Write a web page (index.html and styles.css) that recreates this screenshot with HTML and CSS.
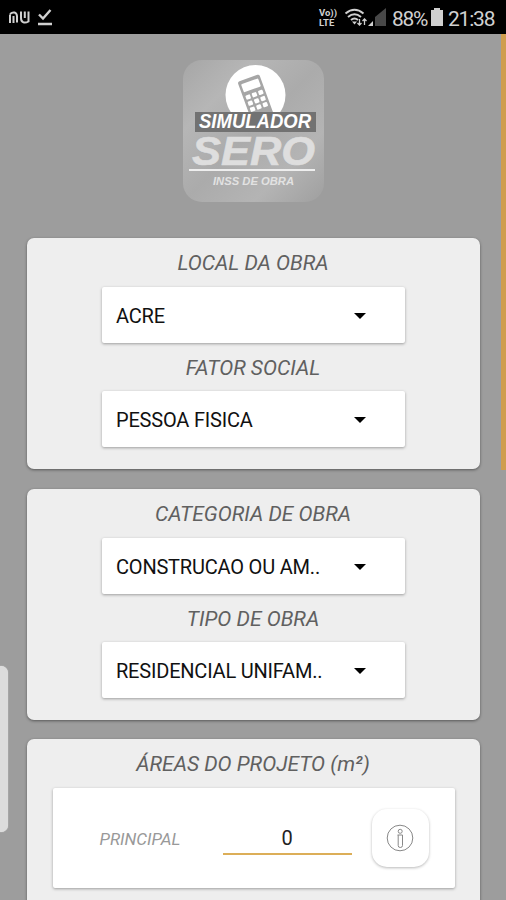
FILE: index.html
```html
<!DOCTYPE html>
<html lang="pt-BR">
    <head>
        <meta charset="UTF-8"/>
        <title>Simulador SERO</title>
        <link rel="stylesheet" href="styles.css">
    </head>

    <body>
        <header class="status-bar">
            <div class="status-left">
                <svg class="nu" viewBox="0 0 22 14" width="22" height="14">
                    <path d="M2 13V4.500M2 4C5 1.500 8.500 2 9 6V12.500M5.500 13V6"/>
                    <path d="M13 1.500V8C13 13 17 13.500 20.500 11.500V1.500M16.800 1.500V8"/>
                </svg>
                <svg class="check" viewBox="0 0 16 18" width="16" height="18">
                    <path d="M2 6.500L6 10.500L13.500 2M1 16H15"/>
                </svg>
            </div>
            <div class="status-right">
                <span class="volte"><span>Vo))</span><span>LTE</span></span>
                <svg class="wifi" viewBox="0 0 24 19" width="24" height="19">
                    <path d="M1.500 5.500Q10.500-2 19.500 5.500M4 9Q10.500 3.500 17 9M7 12Q10.500 9 14 12"/>
                    <path class="solid" d="M8 13.500L10.500 16.500L13 13.500Z"/>
                    <path class="arrows" d="M15.500 11V17M13.500 15L15.500 17L17.500 15M20.500 17V11M18.500 13L20.500 11L22.500 13"/>
                </svg>
                <svg class="signal" viewBox="0 0 18 18" width="18" height="18">
                    <path fill="#484848" d="M18 0V18H7V9Z"/>
                    <path fill="#d0d0d0" d="M5 13V18H0Z"/>
                </svg>
                <span class="battery-text">88%</span>
                <svg class="battery" viewBox="0 0 12 18" width="12" height="18">
                    <path fill="#d0d0d0" d="M3 0H9V2H12V18H0V2H3Z"/>
                </svg>
                <span class="clock">21:38</span>
            </div>
        </header>

        <main class="screen">
            <svg class="logo" viewBox="0 0 142 142" width="142" height="142">
                <defs>
                    <linearGradient id="logoBg" x1="0" y1="0" x2="1" y2="1">
                        <stop offset="0" stop-color="#a6a6a6"/>
                        <stop offset=".25" stop-color="#b6b6b6"/>
                        <stop offset=".5" stop-color="#ababab"/>
                        <stop offset=".75" stop-color="#b4b4b4"/>
                        <stop offset="1" stop-color="#9f9f9f"/>
                    </linearGradient>
                    <clipPath id="aboveLabel"><rect width="142" height="52"/></clipPath>
                </defs>
                <rect width="141" height="142" rx="19" fill="url(#logoBg)"/>
                <g clip-path="url(#aboveLabel)">
                    <circle cx="72.500" cy="35" r="30" fill="#fff"/>
                    <g transform="translate(71.500 35) rotate(-20)">
                        <rect x="-11.500" y="-18" width="23" height="42" rx="2" fill="#a6a6a6"/>
                        <rect x="-9" y="-14.500" width="18" height="8.500" rx="1" fill="#fff"/>
                        <g fill="#fff">
                            <rect x="-9" y="-2.500" width="4.800" height="4.500" rx="1"/>
                            <rect x="-2.300" y="-2.500" width="4.800" height="4.500" rx="1"/>
                            <rect x="4.400" y="-2.500" width="4.800" height="4.500" rx="1"/>
                            <rect x="-9" y="4" width="4.800" height="4.500" rx="1"/>
                            <rect x="-2.300" y="4" width="4.800" height="4.500" rx="1"/>
                            <rect x="4.400" y="4" width="4.800" height="4.500" rx="1"/>
                            <rect x="-9" y="10.500" width="4.800" height="4.500" rx="1"/>
                            <rect x="-2.300" y="10.500" width="4.800" height="4.500" rx="1"/>
                            <rect x="4.400" y="10.500" width="4.800" height="4.500" rx="1"/>
                        </g>
                    </g>
                </g>
                <rect x="12" y="52" width="121" height="20" fill="#727272"/>
                <text class="logo-top" x="16" y="68" textLength="112" lengthAdjust="spacingAndGlyphs">SIMULADOR</text>
                <text class="logo-name" x="9" y="105" textLength="123" lengthAdjust="spacingAndGlyphs">SERO</text>
                <rect x="6" y="109" width="126" height="2" fill="#eee"/>
                <text class="logo-sub" x="30" y="125" textLength="81" lengthAdjust="spacingAndGlyphs">INSS DE OBRA</text>
            </svg>

            <section class="card">
                <h2>LOCAL DA OBRA</h2>
                <div class="select"><span>ACRE</span><i class="caret"></i></div>
                <h2>FATOR SOCIAL</h2>
                <div class="select"><span>PESSOA FISICA</span><i class="caret"></i></div>
            </section>

            <section class="card">
                <h2>CATEGORIA DE OBRA</h2>
                <div class="select"><span>CONSTRUCAO OU AM..</span><i class="caret"></i></div>
                <h2>TIPO DE OBRA</h2>
                <div class="select"><span>RESIDENCIAL UNIFAM..</span><i class="caret"></i></div>
            </section>

            <section class="card">
                <h2>ÁREAS DO PROJETO (m²)</h2>
                <div class="area">
                    <label>PRINCIPAL</label>
                    <div class="value">0</div>
                    <div class="info">
                        <svg viewBox="0 0 28 28" width="28" height="28">
                            <circle cx="14" cy="14" r="12.800"/>
                            <circle cx="14.200" cy="7.300" r="2"/>
                            <path d="M11.500 11H16.500V21.500Q16.500 23.500 14.300 23.500T12.200 21.500V11"/>
                        </svg>
                    </div>
                </div>
            </section>
        </main>

        <div class="scrollbar"></div>
        <div class="edge-handle"></div>
    </body>
</html>
```
FILE: styles.css
```css
*{
    box-sizing:border-box;
}
body{
    margin:0;
    height:900px;
    overflow:hidden;
    background:#9d9d9d;
    font-family:Roboto, "Liberation Sans", sans-serif;
}

.status-bar{
    display:flex;
    justify-content:space-between;
    height:34px;
    padding:0 11px 0 8px;
    background:#000;
    color:#d0d0d0;
}
.status-left,
.status-right{
    display:flex;
    align-items:center;
}
.status-left svg,
.wifi{
    fill:none;
    stroke:#d0d0d0;
    stroke-width:2;
}
.status-left .check{
    margin-left:7px;
    stroke-width:2.4;
}
.volte{
    display:flex;
    flex-direction:column;
    width:19px;
    margin-right:6px;
    padding-top:2px;
    font-size:9.5px;
    font-weight:700;
    line-height:10px;
}
.volte span{
    height:10px;
}
.wifi .solid{
    fill:#d0d0d0;
    stroke:none;
}
.wifi .arrows{
    stroke-width:1.3;
}
.signal{
    margin:0 6px 0 0;
}
.battery-text,
.clock{
    font-size:21px;
    line-height:34px;
    padding-top:3px;
}
.battery-text{
    width:34px;
    letter-spacing:-1.3px;
}
.battery{
    margin:0 5px;
}
.clock{
    width:47px;
    letter-spacing:-1.2px;
}

.screen{
    display:flex;
    flex-direction:column;
    align-items:center;
    height:866px;
    padding-top:26px;
    overflow:hidden;
}
.logo{
    flex:none;
    margin:0 0 36px 2px;
}
.logo text{
    font-family:"Liberation Sans", sans-serif;
    font-style:italic;
    font-weight:700;
}
.logo-top{
    font-size:20px;
    fill:#fff;
}
.logo-name{
    font-size:41px;
    fill:#dedede;
    stroke:#dedede;
    stroke-width:.6;
}
.logo-sub{
    font-size:11.5px;
    fill:#e2e2e2;
}

.card{
    display:flex;
    flex-direction:column;
    align-items:center;
    flex:none;
    width:453px;
    height:231px;
    margin-bottom:19.5px;
    border-radius:7px;
    background:#eee;
    box-shadow:0 1px 3px rgba(0,0,0,.45);
}
.card h2{
    margin:0;
    padding-top:2px;
    height:49px;
    font-size:21px;
    font-style:italic;
    font-weight:400;
    line-height:47px;
    color:#606060;
}
.select + h2{
    height:48px;
}
.select{
    display:flex;
    align-items:center;
    justify-content:space-between;
    width:303px;
    height:56px;
    margin-left:1px;
    padding:2px 39px 0 14px;
    border-radius:2px;
    background:#fff;
    box-shadow:0 1px 3px rgba(0,0,0,.35);
    font-size:20px;
    letter-spacing:-.2px;
    color:#111;
}
.caret{
    border:6.5px solid transparent;
    border-top-color:#000;
    border-bottom:0;
}

.area{
    display:flex;
    align-items:center;
    width:402px;
    height:100px;
    margin-left:1px;
    padding-left:47px;
    border-radius:2px;
    background:#fff;
    box-shadow:0 1px 3px rgba(0,0,0,.35);
}
.area label{
    width:123px;
    padding-top:1px;
    font-size:17px;
    font-style:italic;
    font-weight:400;
    color:#999;
}
.value{
    width:129px;
    height:33px;
    margin-top:1px;
    border-bottom:2px solid #dcae58;
    font-size:20px;
    line-height:32px;
    text-align:center;
    color:#222;
}
.info{
    display:flex;
    align-items:center;
    justify-content:center;
    width:57px;
    height:58px;
    margin-left:20px;
    border-radius:15px;
    background:#fff;
    box-shadow:0 1px 3px rgba(0,0,0,.28);
}
.info svg{
    fill:none;
    stroke:#888;
    stroke-width:1;
}

/* overlays on the screen edges */
.scrollbar{
    position:absolute;
    top:34px;
    right:0;
    width:5px;
    height:436px;
    background:#cf9d4e;
}
.edge-handle{
    position:absolute;
    top:666px;
    left:0;
    width:8px;
    height:166px;
    border-radius:0 7px 7px 0;
    background:#dcdcdc;
    box-shadow:0 0 1px #eee;
}
```
